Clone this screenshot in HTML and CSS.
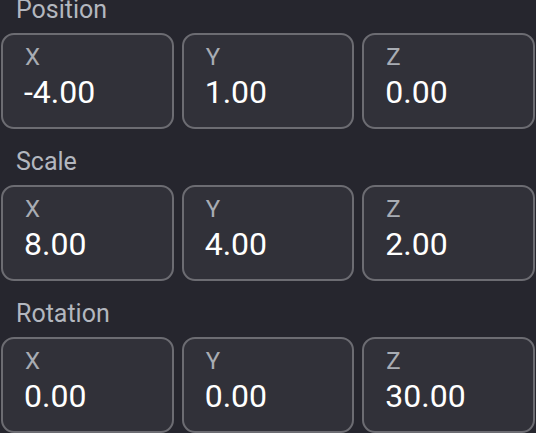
FILE: index.html
```html
<!DOCTYPE html>
<html>
<head>
<meta charset="utf-8">
<link rel="stylesheet" href="styles.css">
</head>
<body>
<div class="panel">
  <section class="group">
    <div class="group-title">Position</div>
    <div class="fields">
      <div class="field"><div class="axis">X</div><div class="value">-4.00</div></div>
      <div class="field"><div class="axis">Y</div><div class="value">1.00</div></div>
      <div class="field"><div class="axis">Z</div><div class="value">0.00</div></div>
    </div>
  </section>
  <section class="group">
    <div class="group-title">Scale</div>
    <div class="fields">
      <div class="field"><div class="axis">X</div><div class="value">8.00</div></div>
      <div class="field"><div class="axis">Y</div><div class="value">4.00</div></div>
      <div class="field"><div class="axis">Z</div><div class="value">2.00</div></div>
    </div>
  </section>
  <section class="group">
    <div class="group-title">Rotation</div>
    <div class="fields">
      <div class="field"><div class="axis">X</div><div class="value">0.00</div></div>
      <div class="field"><div class="axis">Y</div><div class="value">0.00</div></div>
      <div class="field"><div class="axis">Z</div><div class="value">30.00</div></div>
    </div>
  </section>
</div>
</body>
</html>
```
FILE: styles.css
```css
html, body {
  margin: 0;
  padding: 0;
  background: #26262e;
  font-family: Roboto, "Liberation Sans", sans-serif;
}
.panel {
  display: flex;
  flex-direction: column;
  gap: 23px;
  padding: 0 1px 0 1px;
}
.group {
  display: flex;
  flex-direction: column;
  gap: 13px;
}
.group-title {
  font-size: 25px;
  line-height: 20px;
  height: 20px;
  color: #b3b7bf;
  padding-left: 15px;
}
.fields {
  display: grid;
  grid-template-columns: repeat(3, 1fr);
  gap: 8px;
}
.field {
  box-sizing: border-box;
  height: 96px;
  border: 2px solid #6c6c72;
  border-radius: 13px;
  background: #313139;
  padding: 7px 10px 0 22px;
}
.axis {
  font-size: 24px;
  line-height: 30px;
  color: #a8acb3;
}
.value {
  font-size: 32px;
  line-height: 40px;
  margin-left: -1px;
  color: #ffffff;
}
```
